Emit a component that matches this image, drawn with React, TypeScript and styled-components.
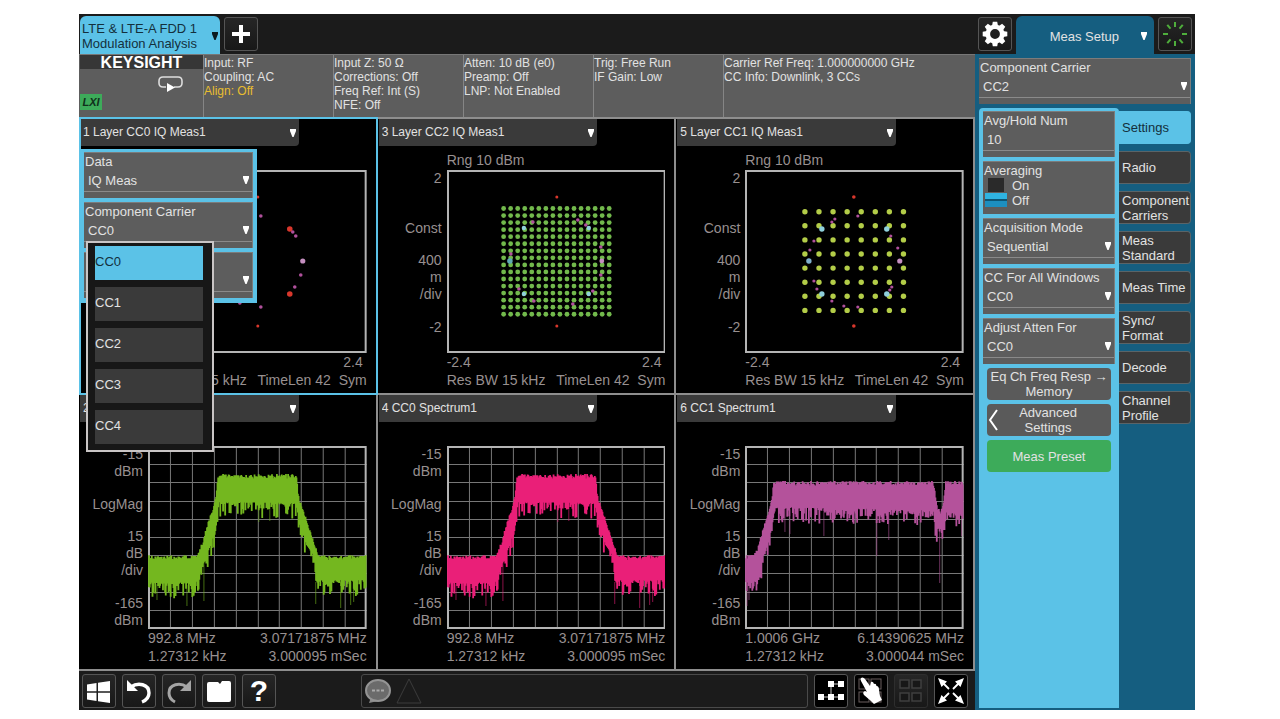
import React, { useId, useState } from 'react';
import styled, { createGlobalStyle, css } from 'styled-components';

const color = {
  cyan: '#5bc2e7',
  blue: '#155e80',
  panel: '#5d5d5d',
  dark: '#3a3a3a',
  black: '#1b1b1b',
  line: '#8e8e8e',
  text: '#e2e2e2',
  axis: '#989090',
};

const Global = createGlobalStyle`
  * { box-sizing: border-box; }
  body { margin: 0; background: #fff; font-family: "Liberation Sans", Arial, sans-serif; font-size: 13px; line-height: 15px; color: ${color.text}; }
  button, select, input { font: inherit; color: inherit; margin: 0; }
  button { cursor: pointer; }
  ul, p { margin: 0; padding: 0; list-style: none; }
`;

const Page = styled.main`
  padding: 14px 85px 9px 79px;
`;

const Screen = styled.div`
  background: ${color.black};
`;

/* ---------- top bar ---------- */

const TopBar = styled.header`
  display: flex;
  align-items: center;
  gap: 4px;
  height: 40px;
  padding: 0 3px 0 1px;
`;

const ModeTab = styled.button<{ $accent?: boolean }>`
  align-self: flex-end;
  display: flex;
  align-items: center;
  justify-content: ${(p) => (p.$accent ? 'space-between' : 'flex-end')};
  gap: ${(p) => (p.$accent ? 4 : 22)}px;
  width: ${(p) => (p.$accent ? 140 : 138)}px;
  height: 38px;
  padding: 2px ${(p) => (p.$accent ? 2 : 7)}px 0 2px;
  border: 0;
  border-radius: 6px 6px 0 0;
  background: ${(p) => (p.$accent ? color.cyan : color.blue)};
  color: ${(p) => (p.$accent ? '#14303c' : color.text)};
  text-align: left;
  white-space: nowrap;
`;

const Spacer = styled.div`
  flex: 1;
`;

const IconButton = styled.button<{ $tone?: 'black' | 'dim' }>`
  display: grid;
  place-items: center;
  flex: none;
  width: 34px;
  height: 34px;
  padding: 0;
  border: 1px solid ${(p) => (p.$tone === 'dim' ? '#2e2e2e' : '#555')};
  border-radius: 3px;
  background: ${(p) => (p.$tone === 'black' ? '#000' : 'linear-gradient(#262626, #181818)')};
  font-size: 30px;
  font-weight: bold;
  line-height: 32px;
  color: #fff;
`;

/* ---------- main columns ---------- */

const Columns = styled.div`
  display: grid;
  grid-template-columns: minmax(0, 1fr) 220px;
`;

const Status = styled.section`
  display: grid;
  grid-template-columns: 124fr 130fr 130fr 130fr 130fr 252fr;
  height: 63px;
  border-top: 1px solid #777;
  background: ${color.panel};
`;

const StatusCell = styled.div`
  padding-top: 1px;
  border-left: 1px solid #858585;
  font-size: 12px;
  line-height: 14px;
  white-space: nowrap;
`;

const Warn = styled.p`
  color: #e8bd2f;
`;

const Brand = styled.div`
  display: grid;
  grid-template-rows: 14px 25px 16px;
  padding-left: 1px;
`;

const BrandName = styled.strong`
  background: #363636;
  text-align: center;
  font-size: 16px;
  line-height: 16px;
  color: #fff;
`;

const SweepIcon = styled.svg`
  justify-self: end;
  align-self: end;
  margin-right: 20px;
`;

const Badge = styled.span`
  justify-self: start;
  width: 22px;
  background: #3dab5a;
  color: #10301a;
  text-align: center;
  font-size: 11px;
  font-style: italic;
  font-weight: bold;
  line-height: 16px;
`;

const Windows = styled.section`
  display: grid;
  grid-template-columns: repeat(3, minmax(0, 1fr));
`;

const Pane = styled.article<{ $active?: boolean }>`
  position: relative;
  padding: 0 0 4px 1px;
  border: solid ${color.line};
  border-width: 2px 2px 0 0;
  background: #000;
  ${(p) =>
    p.$active &&
    css`
      z-index: 1;
      &::after {
        content: '';
        position: absolute;
        inset: -2px -2px -2px 0;
        border: 2px solid ${color.cyan};
        pointer-events: none;
      }
    `}
`;

const Picker = styled.div<{ $title?: boolean }>`
  display: grid;
  align-items: center;
  ${(p) =>
    p.$title &&
    css`
      width: 74%;
      height: 27px;
      border-radius: 0 0 4px 0;
      background: ${color.dark};
      font-size: 12px;
      padding: 0 3px;
    `}
  > * {
    grid-area: 1 / 1;
  }
  > svg {
    justify-self: end;
    pointer-events: none;
  }
`;

const Select = styled.select`
  appearance: none;
  width: 100%;
  height: 22px;
  padding: 0;
  border: 0;
  background: none;
  outline: none;
`;

const Plot = styled.div`
  display: grid;
  grid-template-columns: 63px minmax(0, 1fr);
  column-gap: 5px;
  padding-right: 9px;
  font-size: 14px;
  line-height: 17px;
  color: ${color.axis};
  white-space: nowrap;
`;

const Range = styled.div`
  grid-column: 2;
  height: 24px;
  padding-top: 6px;
`;

const Axis = styled.div`
  display: flex;
  flex-direction: column;
  justify-content: space-between;
  text-align: right;
`;

const AxisGroup = styled.div<{ $lines: number }>`
  min-height: ${(p) => p.$lines * 17}px;
`;

const ChartSvg = styled.svg`
  display: block;
  width: 100%;
  height: 183px;
`;

const Foot = styled.div`
  grid-column: 2;
  display: flex;
  justify-content: space-between;
  line-height: 18px;
  white-space: pre;
`;

/* ---------- parameter controls ---------- */

const ParamBox = styled.div`
  height: 46px;
  padding-top: 1px;
  background: ${color.panel};
  border: solid #7c7c7c;
  border-width: 1px 1px 0 0;
  color: ${color.text};
`;

const ParamLabel = styled.label`
  display: block;
  padding-left: 1px;
  line-height: 15px;
  white-space: nowrap;
`;

const ParamValue = styled(Picker)`
  padding: 0 3px 0 4px;
  border-bottom: 1px solid #8a8a8a;
`;

const ParamInput = styled.input`
  width: 100%;
  height: 22px;
  padding: 0;
  border: 0;
  background: none;
  outline: none;
`;

const ListTrigger = styled.button`
  height: 22px;
  padding: 0;
  border: 0;
  background: none;
  text-align: left;
`;

const PaneMenu = styled.div`
  position: absolute;
  top: 30px;
  left: 0;
  z-index: 2;
  display: flex;
  flex-direction: column;
  gap: 4px;
  width: 178px;
  padding: 3px 4px 5px 5px;
  background: ${color.cyan};
`;

const OptionList = styled.ul`
  position: absolute;
  top: 92px;
  left: 7px;
  display: flex;
  flex-direction: column;
  gap: 7px;
  width: 128px;
  padding: 3px 9px 6px 7px;
  border: 2px solid #c9c5c5;
  background: #171717;
`;

const Option = styled.li<{ $on?: boolean }>`
  height: 34px;
  background: ${(p) => (p.$on ? color.cyan : color.dark)};
  color: ${(p) => (p.$on ? '#14303c' : color.text)};
  line-height: 32px;
`;

/* ---------- side panel ---------- */

const Side = styled.aside`
  display: flex;
  flex-direction: column;
  gap: 4px;
  padding: 4px 4px 2px;
  background: ${color.blue};
`;

const SideBody = styled.div`
  flex: 1;
  display: grid;
  grid-template-columns: 140px minmax(0, 1fr);
`;

const Settings = styled.div`
  display: flex;
  flex-direction: column;
  gap: 4px;
  padding: 3px 4px;
  border-radius: 4px 4px 0 0;
  background: ${color.cyan};
`;

const ToggleBox = styled(ParamBox)`
  height: 53px;
`;

const ToggleRow = styled.div`
  display: flex;
  gap: 5px;
  padding-left: 2px;
`;

const Toggle = styled.input`
  appearance: none;
  width: 22px;
  height: 30px;
  background:
    linear-gradient(#2a2a2a, #2a2a2a) 3px 0 / 16px 14px no-repeat,
    linear-gradient(#2fb4e2 0 6px, #0d5675 6px 8px, #1c8fc0 8px) 0 15px / 22px 14px no-repeat;
`;

const ActionButton = styled.button<{ $preset?: boolean }>`
  display: grid;
  place-content: center;
  height: 32px;
  margin: 0 4px;
  padding: 0;
  border: 0;
  border-radius: 4px;
  background: ${(p) => (p.$preset ? '#3dab5a' : '#5a5a5a')};
  text-align: center;
  white-space: nowrap;
`;

const BackButton = styled(ActionButton)`
  display: flex;
  align-items: center;
  justify-content: space-between;
  padding-right: 34px;
`;

const Tabs = styled.nav`
  display: flex;
  flex-direction: column;
  gap: 7px;
  padding-top: 3px;
`;

const SideTab = styled.button<{ $on?: boolean }>`
  height: 33px;
  padding: 0 0 0 3px;
  border: solid ${(p) => (p.$on ? color.cyan : '#5a6468')};
  border-width: 1px 1px 1px 0;
  border-radius: 0 4px 4px 0;
  background: ${(p) => (p.$on ? color.cyan : color.dark)};
  color: ${(p) => (p.$on ? '#14303c' : color.text)};
  text-align: left;
`;

/* ---------- bottom bar ---------- */

const BottomBar = styled.footer`
  display: flex;
  align-items: center;
  gap: 6px;
  height: 41px;
  padding: 1px 7px 0 3px;
  border-top: 2px solid ${color.line};
`;

const Message = styled.div`
  flex: 1;
  height: 34px;
  margin-left: 79px;
  border: 1px solid #4a4a4a;
  border-radius: 3px;
`;

/* ---------- drawings ---------- */

const Arrow = ({ fill = '#fff' }: { fill?: string }) => (
  <svg width="6" height="8" viewBox="0 0 6 8" aria-hidden>
    <path d="M0 0H6V2L3.6 8H2.4L0 2Z" fill={fill} />
  </svg>
);

const GearIcon = () => (
  <svg width="26" height="26" viewBox="-13 -13 26 26" aria-hidden>
    <circle r="7.2" fill="none" stroke="#fff" strokeWidth="4.6" />
    {[0, 45, 90, 135, 180, 225, 270, 315].map((a) => (
      <path key={a} d="M-3 -8L-2.2 -12.3H2.2L3 -8Z" fill="#fff" transform={`rotate(${a})`} />
    ))}
  </svg>
);

const BusyIcon = () => (
  <svg width="26" height="26" viewBox="-13 -13 26 26" aria-hidden>
    {[0, 40, 90, 140, 180, 220, 270, 320].map((a) => (
      <path key={a} d="M0 -7V-12" stroke="#4fae3c" strokeWidth="2" transform={`rotate(${a})`} />
    ))}
  </svg>
);

const Icon = ({ children }: { children: React.ReactNode }) => (
  <svg width="32" height="32" viewBox="1 1 32 32" fill="none" aria-hidden>
    {children}
  </svg>
);

const QUADS = [[7, 7], [19, 7], [7, 20], [19, 20]];

/* Small repeatable noise source so that each trace keeps its shape. */
const noise = (seed: number) => {
  let s = seed;
  return () => {
    s = (s * 16807) % 2147483647;
    return s / 2147483647;
  };
};

type Knot = [number, number];
const at = (knots: Knot[], x: number) => {
  for (let i = 1; i < knots.length; i++) {
    const [x0, y0] = knots[i - 1];
    const [x1, y1] = knots[i];
    if (x <= x1) return y0 + ((y1 - y0) * (x - x0)) / (x1 - x0 || 1);
  }
  return knots[knots.length - 1][1];
};

interface Trace {
  stroke: string;
  seed: number;
  top: Knot[];
  bottom: Knot[];
  spikes: Knot[];
}

const tracePath = ({ seed, top, bottom }: Trace) => {
  const rnd = noise(seed);
  const parts: string[] = [];
  for (let x = 1; x <= 218; x += 0.7) {
    const t = at(top, x) + rnd() * 5 - 3;
    const r = rnd();
    const b = at(bottom, x) + r * r * r * 16 - 2;
    parts.push(`M${x.toFixed(1)} ${t.toFixed(1)}V${b.toFixed(1)}`);
  }
  return parts.join('');
};

const carrier = (stroke: string, seed: number): Trace => ({
  stroke,
  seed,
  top: [[0, 112], [50, 112], [54, 100], [68, 54], [70, 31], [149, 31], [150, 50], [169, 107], [171, 112], [219, 112]],
  bottom: [[0, 138], [48, 139], [55, 121], [67, 88], [71, 58], [149, 59], [152, 80], [160, 102], [167, 113], [168, 136], [219, 136]],
  spikes: [[9, 154], [39, 160], [56, 155], [111, 76], [122, 75], [168, 158], [193, 162], [203, 159], [206, 156]],
});

const TRACES: Record<string, Trace> = {
  green: carrier('#74b71f', 4711),
  pink: carrier('#ea1f78', 4711),
  purple: {
    stroke: '#b4529b',
    seed: 90210,
    top: [[0, 112], [11, 109], [14, 100], [27, 54], [29, 38], [189, 38], [192, 62], [196, 68], [199, 60], [201, 38], [219, 38]],
    bottom: [[0, 138], [11, 137], [16, 120], [27, 82], [30, 63], [189, 66], [192, 84], [200, 86], [201, 68], [219, 70]],
    spikes: [[2, 160], [4, 154], [40, 86], [45, 88], [79, 90], [132, 110], [144, 94], [195, 137], [217, 90]],
  },
};

const Spectrum = ({ trace }: { trace: Trace }) => (
  <ChartSvg viewBox="0 0 219 183" preserveAspectRatio="none" aria-hidden>
    {[1, 2, 3, 4, 5, 6, 7, 8, 9].map((i) => (
      <path key={i} d={`M${Math.round(i * 21.9)}.5 0V183M0 ${Math.round(i * 18.2)}.5H219`} stroke="#777" />
    ))}
    <rect x="1" y="1" width="217" height="181" fill="none" stroke="#b4b4b4" strokeWidth="2" />
    <path d={trace.spikes.map(([x, y]) => `M${x} ${y}V${at(trace.bottom, x)}`).join('')} stroke={trace.stroke} strokeOpacity="0.6" />
    <path d={tracePath(trace)} stroke={trace.stroke} strokeWidth="1.8" />
  </ChartSvg>
);

type Dot = [number, number, number, string];
const RED = '#d8372c';
const MAG = '#b0509c';
const SKY = '#8fd0dc';
const MAUVE = '#c58fc0';

const lattice = (n: number, x0: number, y0: number, step: number, r: number, fill: string): Dot[] =>
  Array.from({ length: n * n }, (_, i) => [x0 + (i % n) * step, y0 + Math.floor(i / n) * step, r, fill]);

const dots = (fill: string, r: number, points: Knot[]): Dot[] => points.map(([x, y]) => [x, y, r, fill]);

const POINTS: Record<string, Dot[]> = {
  cc0: [
    ...dots(RED, 1.5, [[110, 27], [110, 156]]),
    ...dots(RED, 2.8, [[142, 59], [142, 124]]),
    ...dots(MAG, 1.8, [[113, 46], [145, 62], [148, 66], [153, 105], [147, 117], [113, 137], [92, 133]]),
    ...dots(MAUVE, 2.6, [[155, 91]]),
  ],
  cc2: [
    ...lattice(16, 56.7, 38.5, 7.05, 2.4, '#72b94c'),
    ...dots(RED, 1.5, [[110, 27], [110, 156]]),
    ...dots(MAG, 1.8, [[154, 77], [154, 105], [131, 50], [86, 52], [72, 119], [87, 131], [126, 134], [64, 84], [139, 55], [146, 121]]),
    ...dots(SKY, 2.2, [[77, 58], [142, 58], [77, 124], [142, 124]]),
    ...dots('#5fa9b5', 2.8, [[63, 91]]),
    ...dots(MAUVE, 2.4, [[155, 91]]),
  ],
  cc1: [
    ...lattice(8, 60, 41.7, 14.1, 2.7, '#b3cd48'),
    ...dots(RED, 1.8, [[109, 27], [109, 156]]),
    ...dots(MAG, 1.6, [[113, 46], [90, 49], [87, 52], [69, 71], [65, 80], [69, 111], [72, 119], [87, 131], [99, 136], [113, 137], [147, 117], [145, 120], [146, 66], [153, 78]]),
    ...dots(SKY, 2.7, [[77, 59], [142, 59], [77, 124], [142, 124]]),
    ...dots('#7fb0cc', 2.7, [[64, 91]]),
    ...dots(MAUVE, 2.6, [[155, 91]]),
  ],
};

const Constellation = ({ points }: { points: Dot[] }) => (
  <ChartSvg viewBox="0 0 219 183" preserveAspectRatio="none" aria-hidden>
    <rect x="1" y="1" width="217" height="181" fill="none" stroke="#b4b4b4" strokeWidth="2" />
    {points.map(([x, y, r, fill], i) => (
      <circle key={i} cx={x} cy={y} r={r} fill={fill} />
    ))}
  </ChartSvg>
);

/* ---------- composed parts ---------- */

const TitlePicker = ({ title }: { title: string }) => (
  <Picker $title>
    <Select aria-label="Window" defaultValue={title}>
      <option>{title}</option>
    </Select>
    <Arrow />
  </Picker>
);

const Param = ({ label, value, name }: { label?: string; value: string; name?: string }) => {
  const id = useId();
  return (
    <ParamBox>
      <ParamLabel htmlFor={id}>{label ?? '\u00a0'}</ParamLabel>
      <ParamValue>
        <Select id={id} aria-label={label ?? name} defaultValue={value}>
          <option>{value}</option>
        </Select>
        <Arrow />
      </ParamValue>
    </ParamBox>
  );
};

interface WindowProps {
  title: string;
  active?: boolean;
  range?: string;
  axis: string[][];
  feet: [string, string][];
  chart: React.ReactNode;
  children?: React.ReactNode;
}

const MeasWindow = ({ title, active, range, axis, feet, chart, children }: WindowProps) => (
  <Pane $active={active}>
    <TitlePicker title={title} />
    <Plot>
      <Range>{range}</Range>
      <Axis>
        {axis.map((lines, i) => (
          <AxisGroup key={i} $lines={i === 0 || i === 3 ? 2 : lines.length}>
            {lines.map((l) => (
              <p key={l}>{l}</p>
            ))}
          </AxisGroup>
        ))}
      </Axis>
      {chart}
      {feet.map(([a, b]) => (
        <Foot key={b}>
          <span>{a}</span>
          <span>{b}</span>
        </Foot>
      ))}
    </Plot>
    {children}
  </Pane>
);

const IQ_AXIS = [['2'], ['Const'], ['400', 'm', '/div'], ['-2']];
const DB_AXIS = [['-15', 'dBm'], ['LogMag'], ['15', 'dB', '/div'], ['-165', 'dBm']];
const IQ_FEET: [string, string][] = [['-2.4', '2.4 '], ['Res BW 15 kHz', 'TimeLen 42  Sym']];
const MENU_FEET: [string, string][] = [['', '2.4 '], IQ_FEET[1]];
const CC0_FEET: [string, string][] = [['992.8 MHz', '3.07171875 MHz'], ['1.27312 kHz', '3.000095 mSec']];
const CC1_FEET: [string, string][] = [['1.0006 GHz', '6.14390625 MHz'], ['1.27312 kHz', '3.000044 mSec']];
const STATUS = [
  ['Input Z: 50 Ω', 'Corrections: Off', 'Freq Ref: Int (S)', 'NFE: Off'],
  ['Atten: 10 dB (e0)', 'Preamp: Off', 'LNP: Not Enabled'],
  ['Trig: Free Run', 'IF Gain: Low'],
  ['Carrier Ref Freq: 1.000000000 GHz', 'CC Info: Downlink, 3 CCs'],
];
const TABS = ['Settings', 'Radio', 'Component Carriers', 'Meas Standard', 'Meas Time', 'Sync/ Format', 'Decode', 'Channel Profile'];
const CARRIERS = ['CC0', 'CC1', 'CC2', 'CC3', 'CC4'];

export default function App() {
  const [carrierName, setCarrierName] = useState('CC0');
  const [tab, setTab] = useState('Settings');

  return (
    <Page>
      <Global />
      <Screen>
        <TopBar>
          <ModeTab $accent>
            <span>
              LTE &amp; LTE-A FDD 1<br />
              Modulation Analysis
            </span>
            <Arrow fill="#0c1a20" />
          </ModeTab>
          <IconButton aria-label="Add mode">
            <svg width="18" height="18" viewBox="0 0 18 18" aria-hidden>
              <path d="M9 0V18M0 9H18" stroke="#fff" strokeWidth="4" />
            </svg>
          </IconButton>
          <Spacer />
          <IconButton aria-label="System settings">
            <GearIcon />
          </IconButton>
          <ModeTab>
            Meas Setup
            <Arrow />
          </ModeTab>
          <IconButton aria-label="Measuring">
            <BusyIcon />
          </IconButton>
        </TopBar>

        <Columns>
          <div>
            <Status>
              <Brand>
                <BrandName>KEYSIGHT</BrandName>
                <SweepIcon width="25" height="18" viewBox="0 0 25 18" fill="none" aria-hidden>
                  <path d="M8 11H5Q1 11 1 7V5Q1 1 5 1H20Q24 1 24 5V7Q24 11 20 11H16" stroke="#ddd" strokeWidth="1.6" />
                  <path d="M9 7L17 11.5L9 16Z" fill="#fff" />
                </SweepIcon>
                <Badge>LXI</Badge>
              </Brand>
              <StatusCell>
                <p>Input: RF</p>
                <p>Coupling: AC</p>
                <Warn>Align: Off</Warn>
              </StatusCell>
              {STATUS.map((lines) => (
                <StatusCell key={lines[0]}>
                  {lines.map((l) => (
                    <p key={l}>{l}</p>
                  ))}
                </StatusCell>
              ))}
            </Status>

            <Windows>
              <MeasWindow active title="1 Layer CC0 IQ Meas1" axis={[]} feet={MENU_FEET} chart={<Constellation points={POINTS.cc0} />}>
                <PaneMenu>
                  <Param label="Data" value="IQ Meas" />
                  <ParamBox>
                    <ParamLabel as="span" id="carrier-label">Component Carrier</ParamLabel>
                    <ParamValue>
                      <ListTrigger aria-haspopup="listbox" aria-expanded="true" aria-labelledby="carrier-label">
                        {carrierName}
                      </ListTrigger>
                      <Arrow />
                    </ParamValue>
                  </ParamBox>
                  <Param name="Channel" value="" />
                  <OptionList role="listbox" aria-labelledby="carrier-label">
                    {CARRIERS.map((c) => (
                      <Option key={c} role="option" aria-selected={c === carrierName} $on={c === carrierName} onClick={() => setCarrierName(c)}>
                        {c}
                      </Option>
                    ))}
                  </OptionList>
                </PaneMenu>
              </MeasWindow>
              <MeasWindow title="3 Layer CC2 IQ Meas1" range="Rng 10 dBm" axis={IQ_AXIS} feet={IQ_FEET} chart={<Constellation points={POINTS.cc2} />} />
              <MeasWindow title="5 Layer CC1 IQ Meas1" range="Rng 10 dBm" axis={IQ_AXIS} feet={IQ_FEET} chart={<Constellation points={POINTS.cc1} />} />
              <MeasWindow title="2 CC0 Spectrum1" axis={DB_AXIS} feet={CC0_FEET} chart={<Spectrum trace={TRACES.green} />} />
              <MeasWindow title="4 CC0 Spectrum1" axis={DB_AXIS} feet={CC0_FEET} chart={<Spectrum trace={TRACES.pink} />} />
              <MeasWindow title="6 CC1 Spectrum1" axis={DB_AXIS} feet={CC1_FEET} chart={<Spectrum trace={TRACES.purple} />} />
            </Windows>

            <BottomBar>
              <IconButton aria-label="Windows">
                <Icon>
                  <path d="M5 10.5L14.5 9V17.3H5ZM16 8.8L28 7V17.3H16ZM5 18.8H14.5V27L5 25.5ZM16 18.8H28V29L16 27.2Z" fill="#fff" />
                </Icon>
              </IconButton>
              <IconButton aria-label="Undo">
                <Icon>
                  <path d="M9 13C16 8 27 10 27 19C27 23 25 26 20 28" stroke="#fff" strokeWidth="3.4" />
                  <path d="M5 6L5 17H16Z" fill="#fff" />
                </Icon>
              </IconButton>
              <IconButton aria-label="Redo">
                <Icon>
                  <path d="M25 13C18 8 7 10 7 19C7 23 9 26 13 28" stroke="#a5a5a5" strokeWidth="3" />
                  <path d="M29 6V17H18Z" fill="#a5a5a5" />
                </Icon>
              </IconButton>
              <IconButton aria-label="Open file">
                <Icon>
                  <path d="M5 10Q5 8 7 8H16L18 10L20 7H27Q29 7 29 9V26Q29 28 27 28H7Q5 28 5 26Z" fill="#fff" />
                </Icon>
              </IconButton>
              <IconButton aria-label="Help">?</IconButton>
              <Message role="status">
                <svg width="70" height="32" viewBox="0 0 70 32" fill="none" aria-hidden>
                  <path d="M7 28L9 22L16 26Z" fill="#8a8a8a" />
                  <ellipse cx="16" cy="15.500" rx="12" ry="10.500" fill="#6b6b6b" stroke="#949494" strokeWidth="2" />
                  <path d="M10 15.500H22" stroke="#aaa" strokeWidth="2" strokeDasharray="3 1.500" />
                  <path d="M47 4L59 28H35Z" stroke="#3c3c3c" />
                </svg>
              </Message>
              <IconButton $tone="black" aria-label="Sequence">
                <Icon>
                  <path d="M17 10H27M7 23H27M17 10V23" stroke="#ccc" />
                  <path d="M14 7h6v6h-6zM24 7h6v6h-6zM4 20h6v6h-6zM14 20h6v6h-6zM24 20h6v6h-6z" fill="#fff" />
                </Icon>
              </IconButton>
              <IconButton $tone="black" aria-label="Touch">
                <Icon>
                  {QUADS.map(([x, y]) => (
                    <rect key={`${x}${y}`} x={x - 2} y={y - 2} width="10" height="10" stroke="#6a5f5f" />
                  ))}
                  <path d="M7 4Q9 2.500 11 5L16 12L17 8Q19 7 20 10Q22 9 22.500 12Q25 12 25 16L26 22L28 26L20 30L17 27L10 21Q8 18 11 17L13 18L7 7Q6 5 7 4Z" fill="#fff" />
                </Icon>
              </IconButton>
              <IconButton $tone="dim" aria-label="Grid layout">
                <Icon>
                  {QUADS.map(([x, y]) => (
                    <rect key={`${x}${y}`} x={x - 1} y={y - 1} width="9" height="8" stroke="#3f3f3f" strokeWidth="1.500" fill="#171717" />
                  ))}
                </Icon>
              </IconButton>
              <IconButton $tone="black" aria-label="Full screen">
                <Icon>
                  <path d="M8 8L15 15M26 8L19 15M8 26L15 19M26 26L19 19" stroke="#fff" strokeWidth="1.800" />
                  <path d="M4 4L13 7.500L7.500 13ZM30 4L21 7.500L26.500 13ZM4 30L13 26.500L7.500 21ZM30 30L21 26.500L26.500 21Z" fill="#fff" />
                </Icon>
              </IconButton>
            </BottomBar>
          </div>

          <Side>
            <Param label="Component Carrier" value="CC2" />
            <SideBody>
              <Settings>
                <ParamBox>
                  <ParamLabel htmlFor="avg-num">Avg/Hold Num</ParamLabel>
                  <ParamValue>
                    <ParamInput id="avg-num" defaultValue="10" />
                  </ParamValue>
                </ParamBox>
                <ToggleBox>
                  <ParamLabel htmlFor="averaging">Averaging</ParamLabel>
                  <ToggleRow>
                    <Toggle id="averaging" type="checkbox" role="switch" />
                    <div>
                      <p>On</p>
                      <p>Off</p>
                    </div>
                  </ToggleRow>
                </ToggleBox>
                <Param label="Acquisition Mode" value="Sequential" />
                <Param label="CC For All Windows" value="CC0" />
                <Param label="Adjust Atten For" value="CC0" />
                <ActionButton>
                  <span>Eq Ch Freq Resp →</span>
                  <span>Memory</span>
                </ActionButton>
                <BackButton>
                  <svg width="14" height="24" viewBox="0 0 14 24" fill="none" aria-hidden>
                    <path d="M10 2L3 12L10 22" stroke="#fff" strokeWidth="2" />
                  </svg>
                  <span>
                    Advanced
                    <br />
                    Settings
                  </span>
                </BackButton>
                <ActionButton $preset>Meas Preset</ActionButton>
              </Settings>
              <Tabs>
                {TABS.map((t) => (
                  <SideTab key={t} $on={t === tab} onClick={() => setTab(t)}>
                    {t}
                  </SideTab>
                ))}
              </Tabs>
            </SideBody>
          </Side>
        </Columns>
      </Screen>
    </Page>
  );
}
